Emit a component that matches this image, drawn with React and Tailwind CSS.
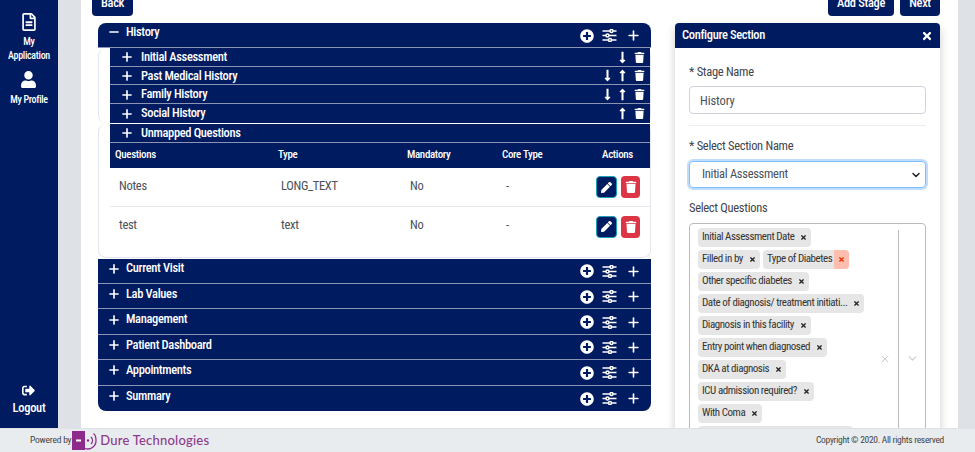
import React from 'react'
import { FaRegFileAlt, FaUser, FaSignOutAlt, FaPlusCircle, FaTrash, FaPen, FaLongArrowAltDown, FaLongArrowAltUp, FaTimes } from 'react-icons/fa'
import { Plus, Minus, X, ChevronDown } from 'lucide-react'

const subSections = [
  { name: 'Initial Assessment', down: true, up: false },
  { name: 'Past Medical History', down: true, up: true },
  { name: 'Family History', down: true, up: true },
  { name: 'Social History', down: false, up: true },
]

const questions = [
  { name: 'Notes', type: 'LONG_TEXT', mandatory: 'No', core: '-' },
  { name: 'test', type: 'text', mandatory: 'No', core: '-' },
]

const stages = ['Current Visit', 'Lab Values', 'Management', 'Patient Dashboard', 'Appointments', 'Summary']

const chipRows = [
  ['Initial Assessment Date'],
  ['Filled in by', 'Type of Diabetes'],
  ['Other specific diabetes'],
  ['Date of diagnosis/ treatment initiati...'],
  ['Diagnosis in this facility'],
  ['Entry point when diagnosed'],
  ['DKA at diagnosis'],
  ['ICU admission required?'],
  ['With Coma'],
]

function Sliders() {
  return (
    <svg width="15" height="13" viewBox="0 0 15 13" fill="none" stroke="white" strokeWidth="1.5">
      <path d="M0.5 2h14M0.5 6.5h14M0.5 11h14" />
      <circle cx="9.5" cy="2" r="1.5" fill="#001b60" />
      <circle cx="5.5" cy="6.5" r="1.5" fill="#001b60" />
      <circle cx="8" cy="11" r="1.5" fill="#001b60" />
    </svg>
  )
}

function StageActions() {
  return (
    <div className="flex items-center gap-[8px] pt-[1px] pr-[10px]">
      <FaPlusCircle className="text-white text-[14px]" />
      <Sliders />
      <Plus className="text-white w-[15px] h-[15px] ml-[1px]" strokeWidth={2.6} />
    </div>
  )
}

function StageRow({ name, last }) {
  return (
    <div className={`flex justify-between h-[25.4px] bg-[#001b60] text-white ${last ? 'rounded-b-lg' : 'border-b border-[#8c94b4]'}`}>
      <div className="flex items-center gap-[5px] pl-[9px] pb-[4px]">
        <Plus className="w-[14px] h-[14px]" strokeWidth={2.8} />
        <span className="text-[12.5px] font-medium tracking-[-0.35px]">{name}</span>
      </div>
      <StageActions />
    </div>
  )
}

function Chip({ label, danger }) {
  return (
    <div className="flex items-center h-[19px] bg-[#e6e6e6] rounded-sm text-[11px] tracking-[-0.45px] text-[#333]">
      <span className="pl-[4px] pr-[2px] whitespace-nowrap">{label}</span>
      <span className={`flex items-center justify-center h-full w-[15px] rounded-r-sm ${danger ? 'bg-[#ffbdad] text-[#de350b]' : 'text-[#222]'}`}>
        <FaTimes className="text-[7px]" />
      </span>
    </div>
  )
}

export default function App() {
  return (
    <div className="flex flex-col h-[452px] overflow-hidden bg-[#dee2e6] text-[#495057] [font-stretch:75%]" style={{ fontFamily: 'Roboto, sans-serif' }}>
      <div className="flex flex-1 min-h-0">
        <aside className="flex flex-col items-center justify-between w-[58px] bg-[#001b60] text-white pt-[13px] pb-[10px]">
          <div className="flex flex-col items-center">
            <FaRegFileAlt className="text-[18px]" />
            <div className="mt-[4px] text-center text-[10px] leading-[13.5px] font-medium tracking-[-0.3px]">My<br />Application</div>
            <FaUser className="mt-[9px] text-[17px]" />
            <div className="mt-[5px] text-[10px] leading-[13px] font-medium tracking-[-0.3px]">My Profile</div>
          </div>
          <div className="flex flex-col items-center">
            <FaSignOutAlt className="text-[13px]" />
            <div className="mt-[2px] text-[12.5px] font-medium tracking-[-0.3px]">Logout</div>
          </div>
        </aside>

        <main className="flex-1 min-w-0 ml-[23px] mr-[17px] bg-white pl-[11px] overflow-hidden">
          <div className="flex justify-between -mt-[10px] pr-[18px]">
            <button className="h-[26px] w-[41px] rounded bg-[#001b60] text-white text-[12.5px] font-medium tracking-[-0.35px]">Back</button>
            <div className="flex gap-[6px]">
              <button className="h-[26px] w-[66px] rounded bg-[#001b60] text-white text-[12.5px] font-medium tracking-[-0.35px]">Add Stage</button>
              <button className="h-[26px] w-[40px] rounded bg-[#001b60] text-white text-[12.5px] font-medium tracking-[-0.35px]">Next</button>
            </div>
          </div>

          <div className="flex mt-[7px] pl-[6px]">
            <div className="w-[553px] shrink-0">
              <div className="flex justify-between h-[25px] bg-[#001b60] text-white rounded-t-lg border-b border-[#8c94b4]">
                <div className="flex items-center gap-[5px] pl-[9px] pb-[6px]">
                  <Minus className="w-[14px] h-[14px]" strokeWidth={2.8} />
                  <span className="text-[12.5px] font-medium tracking-[-0.35px]">History</span>
                </div>
                <StageActions />
              </div>

              <div className="rounded-lg border-l border-r border-[#e3e5ea] pl-[11px]">
                {subSections.map((s) => (
                  <div key={s.name} className="flex justify-between items-center h-[18.67px] pt-[1px] bg-[#001b60] text-white border-b border-[#8c94b4] last:border-b-0">
                    <div className="flex items-center gap-[7px] pl-[10px]">
                      <Plus className="w-[14px] h-[14px]" strokeWidth={2.8} />
                      <span className="text-[12.5px] font-medium tracking-[-0.35px]">{s.name}</span>
                    </div>
                    <div className="flex items-center gap-[2px] pr-[5px]">
                      {s.down && <FaLongArrowAltDown className="text-[13px]" />}
                      {s.up && <FaLongArrowAltUp className="text-[13px]" />}
                      <FaTrash className="text-[11px] ml-[3px]" />
                    </div>
                  </div>
                ))}
              </div>

              <div className="mt-px rounded-lg border border-t-0 border-[#e3e5ea] pl-[11px] h-[134px]">
                <div className="flex items-center gap-[7px] pl-[10px] pt-[1px] h-[19px] bg-[#001b60] text-white border-b border-[#8c94b4]">
                  <Plus className="w-[14px] h-[14px]" strokeWidth={2.8} />
                  <span className="text-[12.5px] font-medium tracking-[-0.35px]">Unmapped Questions</span>
                </div>
                <table className="w-full table-fixed text-left">
                  <thead>
                    <tr className="h-[25px] bg-[#001b60] text-white text-[11px] tracking-[-0.35px]">
                      <th className="w-[163px] pl-[5px] pt-[1px] font-medium">Questions</th>
                      <th className="w-[129px] pl-[5px] pt-[1px] font-medium">Type</th>
                      <th className="w-[95px] pl-[5px] pt-[1px] font-medium">Mandatory</th>
                      <th className="w-[88px] pl-[5px] pt-[1px] font-medium">Core Type</th>
                      <th className="text-center pt-[1px] font-medium">Actions</th>
                    </tr>
                  </thead>
                  <tbody>
                    {questions.map((q, i) => (
                      <tr key={q.name} className={`h-[39px] text-[12.5px] tracking-[-0.3px] ${i === 0 ? 'border-b border-[#e6e8ec]' : ''}`}>
                        <td className="pl-[9px] pb-[2px]">{q.name}</td>
                        <td className="pl-[8px] pb-[2px]">{q.type}</td>
                        <td className="pl-[8px] pb-[2px]">{q.mandatory}</td>
                        <td className="pl-[9px] pb-[2px]">{q.core}</td>
                        <td>
                          <div className="flex gap-[4px] pl-[11px] pt-[1px]">
                            <span className="flex items-center justify-center w-[21px] h-[22px] rounded bg-[#001b60] border border-[#17a2b8] text-white">
                              <FaPen className="text-[11px]" />
                            </span>
                            <span className="flex items-center justify-center w-[19px] h-[22px] rounded bg-[#dc3545] text-white">
                              <FaTrash className="text-[12px]" />
                            </span>
                          </div>
                        </td>
                      </tr>
                    ))}
                  </tbody>
                </table>
              </div>

              <div className="mt-px">
                {stages.map((s, i) => (
                  <StageRow key={s} name={s} last={i === stages.length - 1} />
                ))}
              </div>
            </div>

            <section className="w-[265px] ml-[24px] shrink-0 rounded-t bg-white shadow-[0_4px_10px_rgba(0,0,0,0.2)] h-[500px]">
              <div className="flex justify-between items-center h-[25px] px-[7px] rounded-t bg-[#001b60] text-white">
                <span className="text-[12.5px] font-medium tracking-[-0.35px]">Configure Section</span>
                <FaTimes className="text-[12px]" />
              </div>
              <div className="px-[14px] pt-[16px] text-[12.5px] tracking-[-0.3px]">
                <label className="block leading-[16px] text-[#3f454b]">* Stage Name</label>
                <input readOnly value="History" className="block mt-[6px] w-[237px] h-[28px] px-[10px] rounded border border-[#ced4da] text-[12.5px] tracking-[-0.1px] text-[#495057]" />
                <div className="mt-[11px] border-t border-[#eceeef]" />
                <label className="block mt-[12px] leading-[16px] text-[#3f454b]">* Select Section Name</label>
                <div className="flex items-center justify-between mt-[7px] w-[237px] h-[27px] pl-[12px] pr-[3px] rounded border border-[#80bdff] shadow-[0_0_0_2px_rgba(0,123,255,0.25)]">
                  <span>Initial Assessment</span>
                  <ChevronDown className="w-[12px] h-[12px] text-[#222]" strokeWidth={3} />
                </div>
                <label className="block mt-[12px] leading-[16px] text-[#3f454b]">Select Questions</label>
                <div className="flex mt-[7px] w-[237px] h-[260px] rounded border border-[#bbb]">
                  <div className="flex-1 min-w-0 flex flex-col items-start gap-[3px] pl-[8px] pt-[4px]">
                    {chipRows.map((row) => (
                      <div key={row[0]} className="flex gap-[3px]">
                        {row.map((c) => <Chip key={c} label={c} danger={c === 'Type of Diabetes'} />)}
                      </div>
                    ))}
                    <div className="h-[19px] w-[155px] bg-[#e6e6e6] rounded-sm" />
                  </div>
                  <div className="flex items-start pt-[129px] pr-[7px]">
                    <X className="w-[12px] h-[12px] text-[#ccc]" strokeWidth={2} />
                  </div>
                  <div className="flex justify-center shrink-0 w-[27px] h-[200px] mt-[6px] border-l border-[#bbb] pt-[122px]">
                    <ChevronDown className="w-[13px] h-[13px] text-[#ccc]" strokeWidth={2} />
                  </div>
                </div>
              </div>
            </section>
          </div>
        </main>
      </div>

      <footer className="relative z-10 flex items-center justify-between h-[24px] bg-[#e9ecef] pl-[30px] pr-[31px] border-t border-[#dee2e6] text-[#444]">
        <div className="flex items-center">
          <span className="text-[9.5px] tracking-[-0.2px]">Powered by</span>
          <svg className="ml-[1px]" width="25" height="19" viewBox="0 0 25 19" fill="none">
            <rect x="0" y="0" width="13" height="19" fill="#8e2a8c" />
            <rect x="4" y="8.5" width="5" height="2" fill="white" />
            <circle cx="16" cy="9.5" r="1.2" fill="#8e2a8c" />
            <path d="M19 6a5 5 0 0 1 0 7M13 17.500c6 2 11-2.500 11-8s-1.500-6-2.500-7" stroke="#8e2a8c" strokeWidth="1.3" />
          </svg>
          <span className="ml-[3px] text-[#8e3a8c] text-[13px] font-medium tracking-[0.2px] [font-stretch:100%]" style={{ fontFamily: 'Lato, sans-serif' }}>Dure Technologies</span>
        </div>
        <span className="text-[9.5px] tracking-[-0.3px]">Copyright © 2020. All rights reserved</span>
      </footer>
    </div>
  )
}
